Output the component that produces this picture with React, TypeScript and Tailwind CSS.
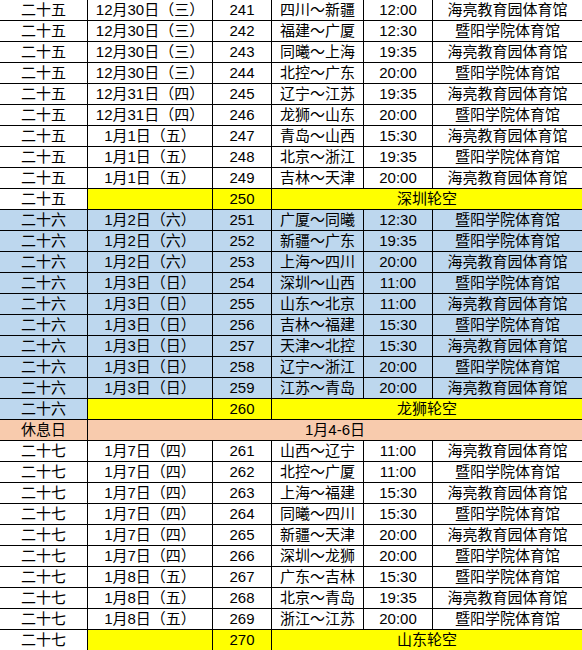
import React from "react";

type Game = [string, string, string, string, string];
type Block =
  | { kind: "games"; round: string; blue: boolean; games: Game[]; bye: [string, string] }
  | { kind: "rest" };

const blocks: Block[] = [
  {
    kind: "games",
    round: "二十五",
    blue: false,
    games: [
      ["12月30日（三）", "241", "四川～新疆", "12:00", "海亮教育园体育馆"],
      ["12月30日（三）", "242", "福建～广厦", "12:30", "暨阳学院体育馆"],
      ["12月30日（三）", "243", "同曦～上海", "19:35", "海亮教育园体育馆"],
      ["12月30日（三）", "244", "北控～广东", "20:00", "暨阳学院体育馆"],
      ["12月31日（四）", "245", "辽宁～江苏", "19:35", "海亮教育园体育馆"],
      ["12月31日（四）", "246", "龙狮～山东", "20:00", "暨阳学院体育馆"],
      ["1月1日（五）", "247", "青岛～山西", "15:30", "海亮教育园体育馆"],
      ["1月1日（五）", "248", "北京～浙江", "19:35", "暨阳学院体育馆"],
      ["1月1日（五）", "249", "吉林～天津", "20:00", "海亮教育园体育馆"],
    ],
    bye: ["250", "深圳轮空"],
  },
  {
    kind: "games",
    round: "二十六",
    blue: true,
    games: [
      ["1月2日（六）", "251", "广厦～同曦", "12:30", "暨阳学院体育馆"],
      ["1月2日（六）", "252", "新疆～广东", "19:35", "暨阳学院体育馆"],
      ["1月2日（六）", "253", "上海～四川", "20:00", "海亮教育园体育馆"],
      ["1月3日（日）", "254", "深圳～山西", "11:00", "暨阳学院体育馆"],
      ["1月3日（日）", "255", "山东～北京", "11:00", "海亮教育园体育馆"],
      ["1月3日（日）", "256", "吉林～福建", "15:30", "暨阳学院体育馆"],
      ["1月3日（日）", "257", "天津～北控", "15:30", "海亮教育园体育馆"],
      ["1月3日（日）", "258", "辽宁～浙江", "20:00", "暨阳学院体育馆"],
      ["1月3日（日）", "259", "江苏～青岛", "20:00", "海亮教育园体育馆"],
    ],
    bye: ["260", "龙狮轮空"],
  },
  { kind: "rest" },
  {
    kind: "games",
    round: "二十七",
    blue: false,
    games: [
      ["1月7日（四）", "261", "山西～辽宁", "11:00", "海亮教育园体育馆"],
      ["1月7日（四）", "262", "北控～广厦", "11:00", "暨阳学院体育馆"],
      ["1月7日（四）", "263", "上海～福建", "15:30", "海亮教育园体育馆"],
      ["1月7日（四）", "264", "同曦～四川", "15:30", "暨阳学院体育馆"],
      ["1月7日（四）", "265", "新疆～天津", "20:00", "海亮教育园体育馆"],
      ["1月7日（四）", "266", "深圳～龙狮", "20:00", "暨阳学院体育馆"],
      ["1月8日（五）", "267", "广东～吉林", "15:30", "暨阳学院体育馆"],
      ["1月8日（五）", "268", "北京～青岛", "19:35", "海亮教育园体育馆"],
      ["1月8日（五）", "269", "浙江～江苏", "20:00", "暨阳学院体育馆"],
    ],
    bye: ["270", "山东轮空"],
  },
];

const cell = "h-[21px] border-b border-black flex items-center justify-center whitespace-nowrap overflow-hidden";

export default function App() {
  const cells: React.ReactNode[] = [];
  let k = 0;
  for (const b of blocks) {
    if (b.kind === "rest") {
      cells.push(
        <div key={k++} className={`${cell} border-r bg-[#f8cbad]`}>休息日</div>,
        <div key={k++} className={`${cell} col-span-5 bg-[#f8cbad]`}>1月4-6日</div>
      );
      continue;
    }
    const bg = b.blue ? "bg-[#bdd7ee]" : "bg-white";
    for (const g of b.games) {
      cells.push(
        <div key={k++} className={`${cell} border-r ${bg}`}>{b.round}</div>,
        <div key={k++} className={`${cell} border-r ${bg}`}>{g[0]}</div>,
        <div key={k++} className={`${cell} border-r ${bg}`}>{g[1]}</div>,
        <div key={k++} className={`${cell} border-r ${bg}`}>{g[2]}</div>,
        <div key={k++} className={`${cell} border-r ${bg}`}>{g[3]}</div>,
        <div key={k++} className={`${cell} ${bg}`}>{g[4]}</div>
      );
    }
    cells.push(
      <div key={k++} className={`${cell} border-r ${bg}`}>{b.round}</div>,
      <div key={k++} className={`${cell} border-r bg-[#ffff00]`}></div>,
      <div key={k++} className={`${cell} border-r bg-[#ffff00]`}>{b.bye[0]}</div>,
      <div key={k++} className={`${cell} col-span-3 bg-[#ffff00]`}>{b.bye[1]}</div>
    );
  }
  return (
    <div
      className="w-[582px] h-[650px] overflow-hidden bg-white text-black text-[15px] leading-[20px] font-['Liberation_Sans','Noto_Sans_CJK_SC',sans-serif]"
    >
      <div className="grid grid-cols-[88px_125px_59px_92px_69px_149px]">{cells}</div>
    </div>
  );
}
